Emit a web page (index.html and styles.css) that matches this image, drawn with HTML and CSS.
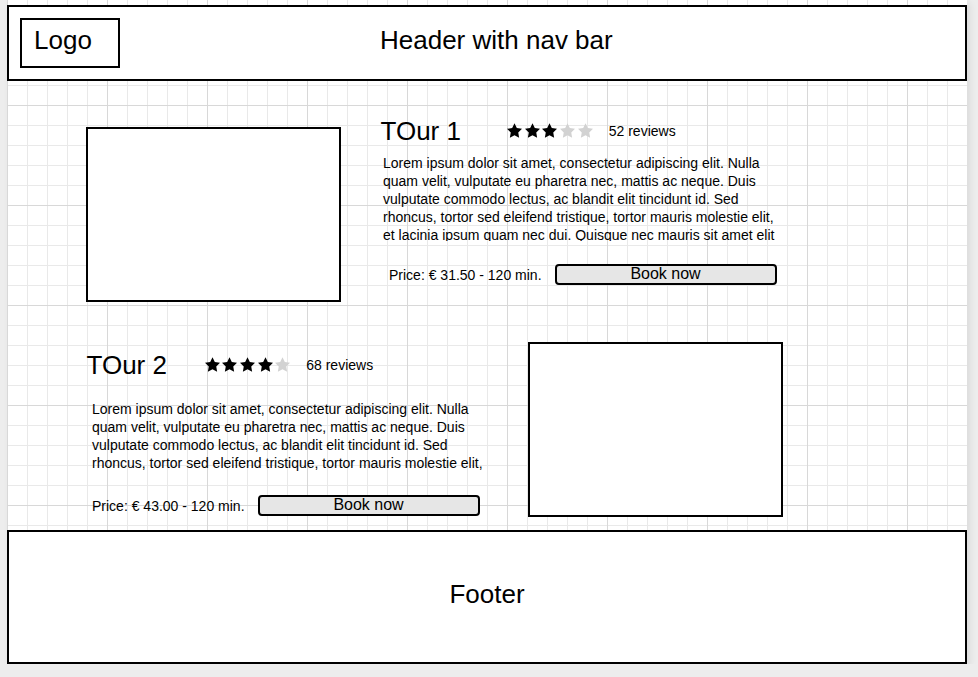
FILE: index.html
```html
<!DOCTYPE html>
<html lang="en">
<head>
<meta charset="utf-8">
<title>Tours wireframe</title>
<link rel="stylesheet" href="styles.css">
</head>
<body>
<div class="page">
  <header class="header">
    <div class="logo">Logo</div>
    <div class="header-title">Header with nav bar</div>
  </header>
  <main class="main">
    <section class="tour tour--first">
      <div class="tour-image tour-image--first"></div>
      <div class="tour-info tour-info--first">
        <div class="tour-head">
          <h2 class="tour-title tour-title--first">TOur 1</h2>
          <span class="stars">
            <svg class="star star--on" viewBox="2 2 20 19.02"><polygon points="12,2 15.09,8.26 22,9.27 17,14.14 18.18,21.02 12,17.77 5.82,21.02 7,14.14 2,9.27 8.91,8.26"/></svg>
            <svg class="star star--on" viewBox="2 2 20 19.02"><polygon points="12,2 15.09,8.26 22,9.27 17,14.14 18.18,21.02 12,17.77 5.82,21.02 7,14.14 2,9.27 8.91,8.26"/></svg>
            <svg class="star star--on" viewBox="2 2 20 19.02"><polygon points="12,2 15.09,8.26 22,9.27 17,14.14 18.18,21.02 12,17.77 5.82,21.02 7,14.14 2,9.27 8.91,8.26"/></svg>
            <svg class="star star--off" viewBox="2 2 20 19.02"><polygon points="12,2 15.09,8.26 22,9.27 17,14.14 18.18,21.02 12,17.77 5.82,21.02 7,14.14 2,9.27 8.91,8.26"/></svg>
            <svg class="star star--off" viewBox="2 2 20 19.02"><polygon points="12,2 15.09,8.26 22,9.27 17,14.14 18.18,21.02 12,17.77 5.82,21.02 7,14.14 2,9.27 8.91,8.26"/></svg>
          </span>
          <span class="reviews">52 reviews</span>
        </div>
        <p class="tour-desc tour-desc--first">Lorem ipsum dolor sit amet, consectetur adipiscing elit. Nulla quam velit, vulputate eu pharetra nec, mattis ac neque. Duis vulputate commodo lectus, ac blandit elit tincidunt id. Sed rhoncus, tortor sed eleifend tristique, tortor mauris molestie elit, et lacinia ipsum quam nec dui. Quisque nec mauris sit amet elit iaculis pretium sit amet quis magna. Aenean velit odio, elementum in tempus ut, vehicula eu diam.</p>
        <div class="tour-foot">
          <span class="price price--first">Price: € 31.50 - 120 min.</span>
          <button class="book" type="button">Book now</button>
        </div>
      </div>
    </section>
    <section class="tour tour--second">
      <div class="tour-info tour-info--second">
        <div class="tour-head">
          <h2 class="tour-title tour-title--second">TOur 2</h2>
          <span class="stars">
            <svg class="star star--on" viewBox="2 2 20 19.02"><polygon points="12,2 15.09,8.26 22,9.27 17,14.14 18.18,21.02 12,17.77 5.82,21.02 7,14.14 2,9.27 8.91,8.26"/></svg>
            <svg class="star star--on" viewBox="2 2 20 19.02"><polygon points="12,2 15.09,8.26 22,9.27 17,14.14 18.18,21.02 12,17.77 5.82,21.02 7,14.14 2,9.27 8.91,8.26"/></svg>
            <svg class="star star--on" viewBox="2 2 20 19.02"><polygon points="12,2 15.09,8.26 22,9.27 17,14.14 18.18,21.02 12,17.77 5.82,21.02 7,14.14 2,9.27 8.91,8.26"/></svg>
            <svg class="star star--on" viewBox="2 2 20 19.02"><polygon points="12,2 15.09,8.26 22,9.27 17,14.14 18.18,21.02 12,17.77 5.82,21.02 7,14.14 2,9.27 8.91,8.26"/></svg>
            <svg class="star star--off" viewBox="2 2 20 19.02"><polygon points="12,2 15.09,8.26 22,9.27 17,14.14 18.18,21.02 12,17.77 5.82,21.02 7,14.14 2,9.27 8.91,8.26"/></svg>
          </span>
          <span class="reviews">68 reviews</span>
        </div>
        <p class="tour-desc tour-desc--second">Lorem ipsum dolor sit amet, consectetur adipiscing elit. Nulla quam velit, vulputate eu pharetra nec, mattis ac neque. Duis vulputate commodo lectus, ac blandit elit tincidunt id. Sed rhoncus, tortor sed eleifend tristique, tortor mauris molestie elit, et lacinia ipsum quam nec dui. Quisque nec mauris sit amet elit iaculis pretium sit amet quis magna. Aenean velit odio, elementum in tempus ut, vehicula eu diam.</p>
        <div class="tour-foot">
          <span class="price price--second">Price: € 43.00 - 120 min.</span>
          <button class="book" type="button">Book now</button>
        </div>
      </div>
      <div class="tour-image tour-image--second"></div>
    </section>
  </main>
  <footer class="footer">Footer</footer>
</div>
</body>
</html>
```

FILE: styles.css
```css
* {
  box-sizing: border-box;
}

body {
  margin: 0;
  background: #ededed;
  font-family: "Liberation Sans", Arial, sans-serif;
  color: #000;
}

.page {
  width: 960px;
  height: 664px;
  margin-left: 7px;
  padding-top: 5px;
  display: flex;
  flex-direction: column;
  background-color: #fff;
  background-image:
    linear-gradient(to right, #d8d8d8 1px, transparent 1px),
    linear-gradient(to bottom, #d8d8d8 1px, transparent 1px),
    linear-gradient(to right, #e9e9e9 1px, transparent 1px),
    linear-gradient(to bottom, #e9e9e9 1px, transparent 1px);
  background-size: 100px 100px, 100px 100px, 20px 20px, 20px 20px;
  background-position: 0 5px;
  box-shadow: 3px 3px 7px rgba(0, 0, 0, 0.08);
}

/* Header */
.header {
  height: 76px;
  flex: 0 0 auto;
  border: 2px solid #000;
  background: #fff;
  display: flex;
  align-items: flex-start;
}

.logo {
  margin: 11px 0 0 11px;
  width: 100px;
  height: 50px;
  border: 2px solid #000;
  padding: 5px 0 0 12px;
  font-size: 26px;
  line-height: 30px;
}

.header-title {
  margin: 18px 0 0 260px;
  font-size: 26px;
  line-height: 30px;
}

/* Main */
.main {
  height: 449px;
  flex: 0 0 auto;
}

.tour {
  display: flex;
  align-items: flex-start;
}

.tour--first {
  padding: 35px 0 0 79px;
}

.tour--second {
  margin-top: 40px;
  padding-left: 79.5px;
}

.tour-image {
  width: 255px;
  height: 175px;
  border: 2px solid #000;
  background: #fff;
  flex: 0 0 auto;
}

.tour-image--first {
  margin-top: 11px;
}

.tour-info--first {
  margin-left: 39.5px;
}

.tour-info--second {
  flex: 0 0 441.5px;
  margin-top: 8px;
}

.tour-head {
  display: flex;
  align-items: center;
  height: 30px;
}

.tour-title {
  margin: 0;
  font-size: 26px;
  font-weight: normal;
  line-height: 30px;
}

.tour-title--first {
  width: 126.5px;
}

.tour-title--second {
  width: 118px;
}

.stars {
  display: flex;
  gap: 2.7px;
  padding-bottom: 1px;
}

.star {
  width: 15px;
  height: 15px;
  display: block;
}

.star--on {
  fill: #000;
}

.star--off {
  fill: #d2d2d2;
}

.reviews {
  margin-left: 16px;
  font-size: 14px;
  line-height: 16px;
}

.tour-desc {
  margin: 0;
  overflow: hidden;
  font-size: 14px;
  line-height: 18px;
}

.tour-desc--first {
  margin-top: 7.5px;
  height: 87px;
  width: 400.5px;
  padding-left: 2.5px;
}

.tour-desc--second {
  margin-top: 20px;
  height: 72px;
  width: 404.5px;
  padding-left: 5.5px;
}

.tour-desc--first + .tour-foot {
  margin-top: 23.5px;
}

.tour-desc--second + .tour-foot {
  margin-top: 23px;
}

.tour-foot {
  display: flex;
  align-items: center;
}

.price {
  font-size: 14px;
  line-height: 16px;
}

.price--first {
  padding-left: 8.5px;
}

.price--second {
  padding-left: 5.5px;
}

.book {
  margin: 0 0 0 13px;
  width: 222px;
  height: 21px;
  border: 2px solid #000;
  border-radius: 4px;
  background: #e6e6e6;
  color: #000;
  font-family: "Liberation Sans", Arial, sans-serif;
  font-size: 16px;
  line-height: 15px;
  padding: 0 0 2px;
}

/* Footer */
.footer {
  height: 134px;
  flex: 0 0 auto;
  border: 2px solid #000;
  background: #fff;
  display: flex;
  align-items: center;
  justify-content: center;
  padding-bottom: 7px;
  font-size: 26px;
  line-height: 30px;
}
```
